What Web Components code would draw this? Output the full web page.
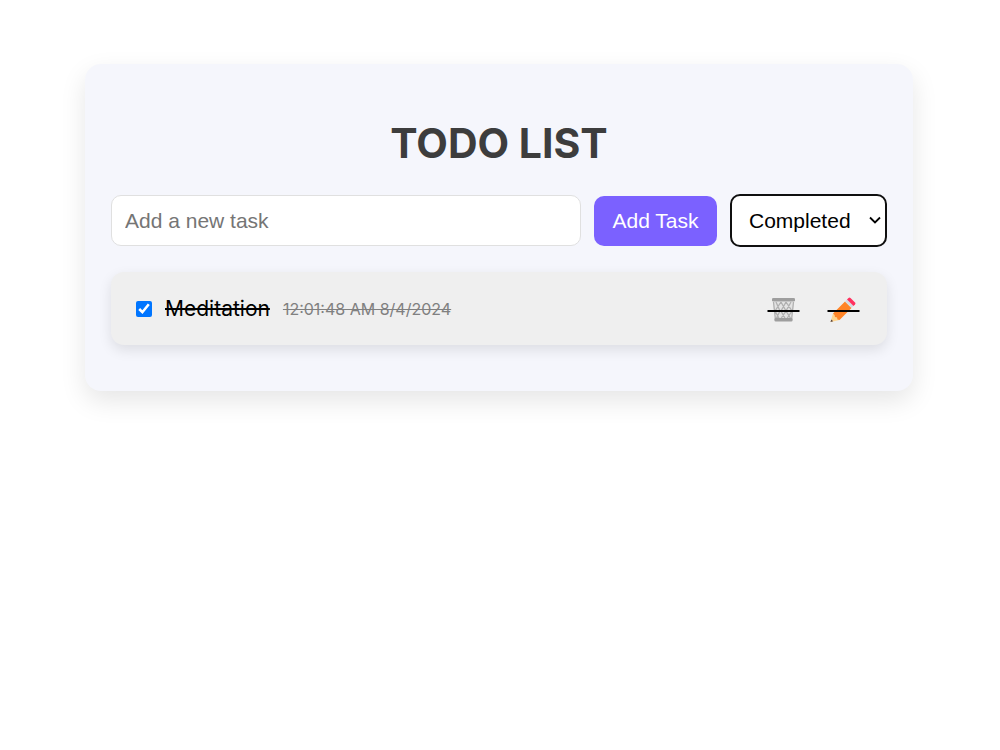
<!DOCTYPE html>
<html lang="en">
<head>
<meta charset="utf-8">
<meta name="viewport" content="width=device-width, initial-scale=1">
<title>Todo List</title>
<style>
  html { background: #fff; }
  body { margin: 0; padding: 64px 87px 64px 85px; font-family: Inter, "Liberation Sans", sans-serif; color: #000; }
</style>
</head>
<body>
<todo-app>
  <todo-form></todo-form>
  <todo-item time="12:01:48 AM 8/4/2024" done>Meditation</todo-item>
</todo-app>

<template id="app">
  <style>
    :host { display: block; }
    .card { padding: 53px 26px 46px; border-radius: 16px; background: #f5f6fc; box-shadow: 0 10px 26px rgba(0,0,0,.1); }
    h1 { margin: 0 0 25px; font-size: 41px; line-height: 52px; font-weight: 700; text-align: center; color: #3d3d3d; }
    main { display: flex; flex-direction: column; gap: 25px; }
  </style>
  <div class="card">
    <h1>TODO LIST</h1>
    <main><slot></slot></main>
  </div>
</template>

<template id="form">
  <style>
    :host { display: block; }
    form { display: flex; align-items: center; gap: 13px; margin: 0; }
    input, button, select { box-sizing: border-box; height: 51px; margin: 0; font: 21px "Liberation Sans", Arial, sans-serif; border-radius: 10px; }
    input { flex: 1; min-width: 0; padding: 0 13px; border: 1px solid #e0e0e0; background: #fff; }
    input::placeholder { color: #757575; }
    button { width: 123px; height: 50px; padding: 0; border: 0; background: #7b61ff; color: #fff; }
    .pick { position: relative; display: flex; }
    select { appearance: none; width: 157px; height: 53px; padding: 0 0 0 17px; border: 2px solid #101010; background: #fff; color: #000; outline: none; }
    .pick svg { position: absolute; right: 5px; top: 20px; width: 14px; height: 12px; pointer-events: none; }
  </style>
  <form>
    <input type="text" placeholder="Add a new task" aria-label="New task">
    <button type="button">Add Task</button>
    <div class="pick">
      <select aria-label="Filter tasks">
        <option>All</option>
        <option selected>Completed</option>
        <option>Pending</option>
      </select>
      <svg viewBox="0 0 14 12" aria-hidden="true"><path d="M2 3.500 7 8.500 12 3.500" fill="none" stroke="#000" stroke-width="1.800"/></svg>
    </div>
  </form>
</template>

<template id="item">
  <style>
    :host { display: flex; align-items: center; box-sizing: border-box; min-height: 73px; padding: 0 26px 0 25px; border-radius: 13px; background: #efefef; box-shadow: 0 5px 13px rgba(0,0,0,.1); }
    label { display: flex; align-items: center; gap: 13px; font-size: 21px; line-height: 26px; }
    input { width: 16px; height: 16px; margin: 0; accent-color: #0075ff; }
    time { margin-left: 13px; font-size: 16px; line-height: 26px; color: #808080; }
    :host([done]) .name, :host([done]) time { text-decoration: line-through; }
    .actions { display: flex; gap: 26px; margin-left: auto; }
    button { display: block; padding: 0; border: 0; background: none; }
    svg { display: block; width: 34px; height: 32px; }
    .strike { display: none; }
    :host([done]) .strike { display: inline; }
  </style>
  <label><input type="checkbox" checked><span class="name"><slot></slot></span></label>
  <time></time>
  <div class="actions">
    <button type="button" aria-label="Delete task">
      <svg viewBox="0 -1 34 32" aria-hidden="true">
        <path d="M6 8h21l-2 18H8z" fill="#e3e3e3"/>
        <path d="M6.500 8 8.500 26M26.500 8 24.500 26M9 8l4 9-4 8M14 8l-6 9 5 9M14 8l5 9-6 9M19 8l-5 9 5 9M24 8l-5 9 5 8M19 8l6 9-6 9" fill="none" stroke="#b0b0b0" stroke-width="1.300"/>
        <rect x="5" y="4" width="23" height="3.500" rx="1.300" fill="#9e9e9e"/>
        <rect x="7.500" y="24" width="18" height="3.500" rx="1.200" fill="#9e9e9e"/>
        <path class="strike" d="M0.500 17h32" stroke="#000" stroke-width="2"/>
      </svg>
    </button>
    <button type="button" aria-label="Edit task">
      <svg viewBox="0 -1 34 32" aria-hidden="true">
        <path d="M3.500 28 6 19.500 12.500 26z" fill="#ffd590"/>
        <path d="M3.500 28 4.300 25.500 6.200 27.200z" fill="#56433c"/>
        <path d="M6 19.500 18 7.500 24.500 14 12.500 26 10.500 25.500 10 23.500 8 23 7.500 21z" fill="#ff8427"/>
        <path d="M18 7.500 20 5.500 26.500 12 24.500 14z" fill="#d4dce2"/>
        <path d="M20 5.500 21.500 4Q22.500 3 23.500 4L28 8.500Q29 9.500 28 10.500L26.500 12z" fill="#ff315f"/>
        <path class="strike" d="M0.500 17h32" stroke="#000" stroke-width="2"/>
      </svg>
    </button>
  </div>
</template>

<script>
  class TemplateElement extends HTMLElement {
    constructor() {
      super();
      this.attachShadow({ mode: "open" }).append(
        document.getElementById(this.constructor.template).content.cloneNode(true));
    }
  }
  class TodoApp extends TemplateElement { static template = "app"; }
  class TodoForm extends TemplateElement { static template = "form"; }
  class TodoItem extends TemplateElement {
    static template = "item";
    connectedCallback() {
      this.shadowRoot.querySelector("time").textContent = this.getAttribute("time");
      const box = this.shadowRoot.querySelector("input");
      box.checked = this.hasAttribute("done");
      box.addEventListener("change", () => this.toggleAttribute("done", box.checked));
    }
  }
  customElements.define("todo-app", TodoApp);
  customElements.define("todo-form", TodoForm);
  customElements.define("todo-item", TodoItem);
</script>
</body>
</html>
